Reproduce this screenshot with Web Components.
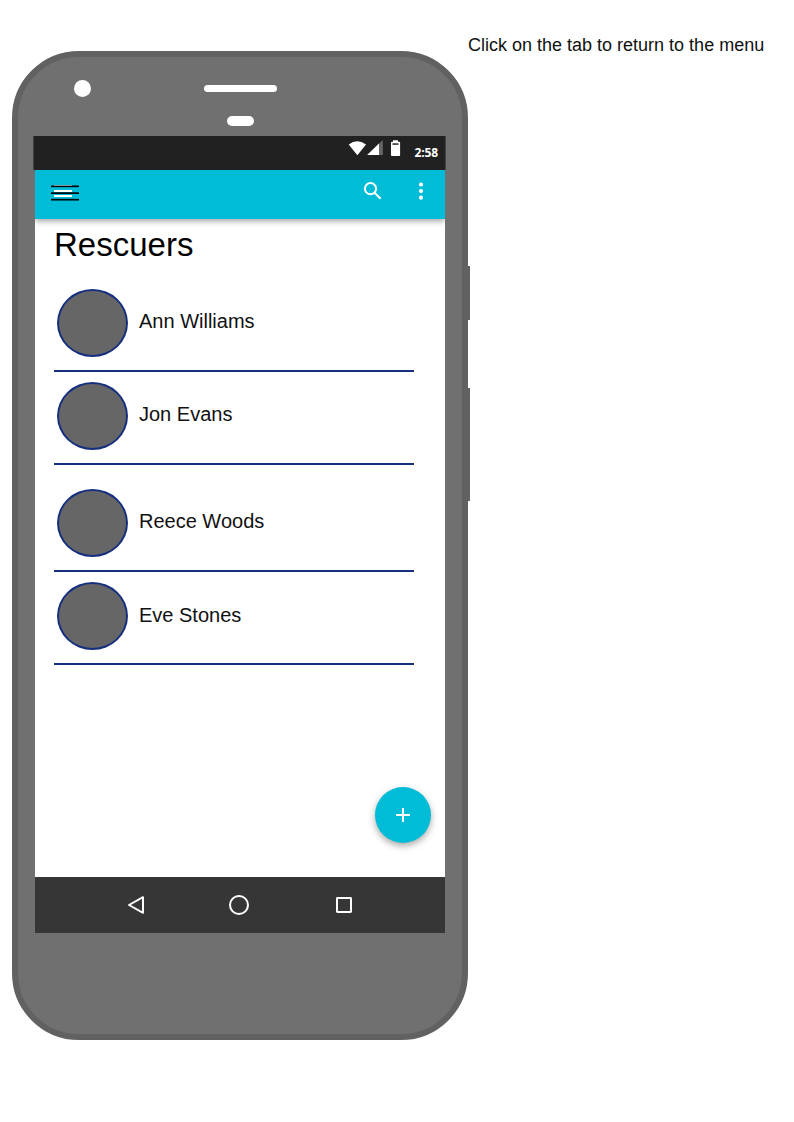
<!DOCTYPE html>
<html lang="en">
<head>
<meta charset="utf-8">
<title>Rescuers</title>
<style>
body{margin:0;background:#fff;font-family:"Liberation Sans",Arial,sans-serif;color:#000}
</style>
</head>
<body>
<rescue-page></rescue-page>
<script>
const define = (name, html) => {
  const t = document.createElement('template');
  t.innerHTML = html;
  customElements.define(name, class extends HTMLElement {
    constructor() {
      super();
      this.attachShadow({mode: 'open'}).append(t.content.cloneNode(true));
    }
  });
};

define('status-bar', `
<style>
:host{display:flex;box-sizing:border-box;height:34px;margin:0 -1px 0 -2px;background:#212121;color:#fff;justify-content:flex-end;align-items:flex-start;padding-right:7px;border:solid #434343;border-width:0 1px}
svg{display:block;flex:none}
span{font:700 12px/16px "Open Sans","Noto Sans",sans-serif;letter-spacing:-.1px;margin-top:9px;white-space:nowrap}
</style>
<svg width="66" height="24" viewBox="348 136 66 24">
<path d="M348.7 144.4Q357.2 138.200 366 144.400L357.400 155.200Z" fill="#fff"/>
<path d="M382.800 140V155H367.200Z" fill="#666"/>
<path d="M379 143.600V155H367.200Z" fill="#fff"/>
<path d="M393 140.300h5v1.400h1.200q.9 0 .9.9V155q0 .9-.9.9h-7.300q-.9 0-.9-.9v-12.400q0-.9.9-.9H393Z" fill="#fff"/>
<path d="M392.500 143.300h6v1.500h-6Z" fill="#212121"/>
</svg><span>2:58</span>`);

define('app-bar', `
<style>
:host{display:flex;box-sizing:border-box;height:49px;background:#00bcd7;justify-content:space-between;align-items:flex-start;padding:8px 16px;position:relative;z-index:1;box-shadow:0 2px 6px rgba(0,0,0,.38);clip-path:inset(0 0 -12px 0)}
svg{display:block}
</style>
<svg width="28" height="32" viewBox="51 178 28 32">
<path d="M51 186.200h28M51 192.900h28M51 199.700h28" stroke="#003842" stroke-width="2"/>
<path d="M51 186.500h28M51 193.500h28M51 199.500h28" stroke="#00080a" stroke-width="1"/>
<path d="M54 185.500h18" stroke="#889598"/>
<path d="M54 191h18M54 196h18" stroke="#fff" stroke-width="2"/>
</svg>
<svg width="66" height="28" viewBox="363 178 66 28" fill="none" stroke="#fff" stroke-width="2">
<circle cx="370.500" cy="188.700" r="5.600"/><path d="M374.600 192.800l6 6"/>
<g fill="#fff" stroke="none"><circle cx="421" cy="184.500" r="2.100"/><circle cx="421" cy="191.100" r="2.100"/><circle cx="421" cy="197.700" r="2.100"/></g>
</svg>`);

define('rescuer-row', `
<style>
:host{display:flex;box-sizing:border-box;width:360px;height:83px;border-bottom:2px solid #16307f;padding-left:3px;font-size:20px;line-height:24px;color:#111}
i{box-sizing:border-box;width:71px;height:68px;border-radius:50%;border:2px solid #16307f;background:#666;margin-right:11px;flex:none}
span{margin-top:var(--name-top,20px)}
</style><i></i><span><slot></slot></span>`);

define('rescuer-list', `
<style>
:host{display:flex;flex-direction:column;box-sizing:border-box;flex:1;padding:6px 0 0 19px;background:#fff}
h1{font-size:33px;font-weight:400;line-height:40px;margin:0 0 24px}
rescuer-row{margin-bottom:10px}
rescuer-row:nth-of-type(2){margin-bottom:24px}
.last{--name-top:21px}
</style>
<h1>Rescuers</h1>
<rescuer-row>Ann Williams</rescuer-row>
<rescuer-row>Jon Evans</rescuer-row>
<rescuer-row>Reece Woods</rescuer-row>
<rescuer-row class="last">Eve Stones</rescuer-row>`);

define('add-button', `
<style>
:host{display:block;position:absolute;right:14px;bottom:90px;width:56px;height:56px;border-radius:50%;background:#00bcd7;box-shadow:0 3px 7px rgba(0,0,0,.34)}
svg{display:block}
</style>
<svg width="56" height="56"><path d="M21 28h14M28 21v14" stroke="#fff" stroke-width="2"/></svg>`);

define('nav-bar', `
<style>
:host{display:flex;height:56px;background:#363636;align-items:center;justify-content:space-between;box-sizing:border-box;padding:0 92px}
svg{display:block;fill:none;stroke:#fff;stroke-width:2;stroke-linejoin:round}
</style>
<svg width="18" height="20"><path d="M2 10L16 2.200V17.800Z"/></svg>
<svg width="22" height="22"><circle cx="10" cy="11" r="9"/></svg>
<svg width="18" height="18"><rect x="2" y="2" width="14" height="14" rx=".4"/></svg>`);

define('phone-frame', `
<style>
:host{display:flex;flex-direction:column;box-sizing:border-box;width:456px;height:989px;margin:51px 0 0 12px;border:6px solid #616161;border-radius:67px;background:#707070;padding:79px 17px 101px;position:relative;flex:none}
.screen{display:flex;flex-direction:column;height:797px;position:relative}
b{position:absolute;background:#fff;border-radius:9px}
.camera{left:56px;top:23px;width:17px;height:17px}
.speaker{left:186px;top:28px;width:73px;height:7px}
.sensor{left:209px;top:59px;width:27px;height:10px}
.key{left:450px;width:2px;border-radius:0;background:#616161}
.power{top:209px;height:54px}
.volume{top:331px;height:113px}
</style>
<b class="camera"></b><b class="speaker"></b><b class="sensor"></b>
<b class="key power"></b><b class="key volume"></b>
<div class="screen"><slot></slot></div>`);

define('rescue-page', `
<style>
:host{display:flex;align-items:flex-start;height:1122px;overflow:hidden}
p{margin:34px 0 0;font-size:18px;line-height:22px;white-space:nowrap;color:#111}
</style>
<phone-frame><status-bar></status-bar><app-bar></app-bar><rescuer-list></rescuer-list><add-button></add-button><nav-bar></nav-bar></phone-frame>
<p>Click on the tab to return to the menu</p>`);
</script>
</body>
</html>
